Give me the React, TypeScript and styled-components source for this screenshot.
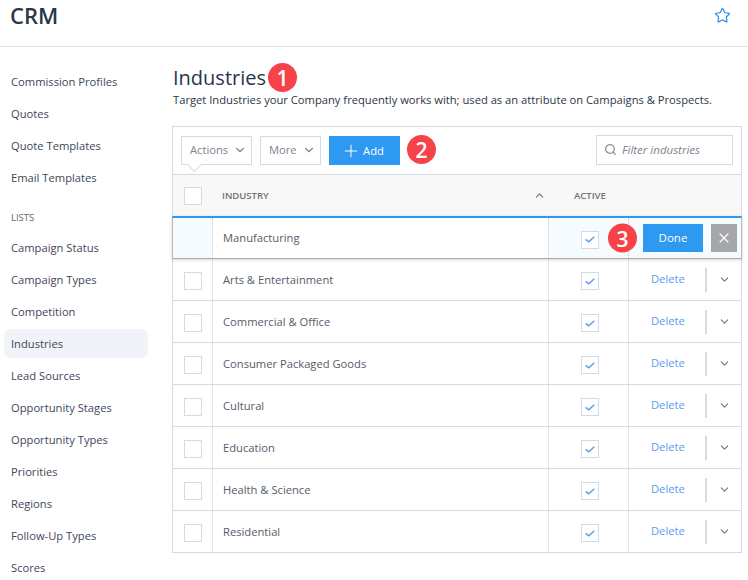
import { createGlobalStyle, styled } from "styled-components";
import { ChevronDown, ChevronUp, Plus, Search, Star, X } from "lucide-react";

const GlobalStyle = createGlobalStyle`
  html, body {
    margin: 0;
    height: 580px;
    overflow: hidden;
    background: #fff;
    font-family: "Open Sans", "Liberation Sans", sans-serif;
    color: #3c4a5c;
  }
  * { box-sizing: border-box; }
`;

const Header = styled.header`
  height: 47px;
  border-bottom: 1px solid #e1e6ee;
  display: flex;
  align-items: flex-start;
  justify-content: space-between;
  padding: 0 17px 0 10px;
`;

const Brand = styled.h1`
  margin: 0;
  font-size: 22px;
  line-height: 31px;
  font-weight: 600;
  color: #2b3648;
`;

const StarButton = styled.span`
  color: #2f8fe8;
  margin-top: 7px;
  display: flex;
`;

const Body = styled.div`
  display: flex;
  align-items: flex-start;
`;

const Sidebar = styled.nav`
  width: 172px;
  flex: none;
  padding: 20px 24px 0 4px;
  display: flex;
  flex-direction: column;
`;

const NavItem = styled.a<{ $active?: boolean }>`
  height: 29px;
  margin-bottom: 3px;
  padding-left: 7px;
  display: flex;
  align-items: center;
  border-radius: 7px;
  font-size: 11.2px;
  color: #3d4759;
  font-weight: ${(p) => (p.$active ? 500 : 400)};
  background: ${(p) => (p.$active ? "#f0f3f8" : "transparent")};
`;

const NavHeading = styled.div`
  height: 29px;
  margin: 8px 0 1px;
  padding-left: 7px;
  display: flex;
  align-items: center;
  font-size: 9.5px;
  color: #5c6675;
`;

const Main = styled.main`
  flex: 1;
  padding: 16px 6px 0 0;
`;

const TitleRow = styled.div`
  display: flex;
  align-items: center;
  gap: 2px;
  height: 29px;
  padding-left: 1px;
`;

const Title = styled.h2`
  margin: 0;
  font-size: 20px;
  font-weight: 500;
  color: #2b3648;
`;

const Badge = styled.span`
  width: 29px;
  height: 29px;
  flex: none;
  border-radius: 50%;
  background: #f7424a;
  color: #fff;
  font-size: 21px;
  font-weight: 600;
  display: flex;
  align-items: center;
  justify-content: center;
`;

const FloatingBadge = styled(Badge)`
  position: absolute;
  right: -9px;
  top: 50%;
  transform: translateY(-50%);
  z-index: 1;
`;

const Description = styled.p`
  margin: 0 0 18px;
  padding-left: 1px;
  height: 16px;
  font-size: 11.2px;
  line-height: 16px;
  color: #2b3648;
  white-space: nowrap;
`;

const Panel = styled.section`
  border: 1px solid #d5dbe5;
  border-bottom: 0;
`;

const Toolbar = styled.div`
  height: 48px;
  padding: 8px 8px 0 8px;
  display: flex;
  align-items: flex-start;
  border-bottom: 1px solid #d5dbe5;
`;

const MenuButton = styled.button<{ $tail?: boolean; $width: number }>`
  position: relative;
  width: ${(p) => p.$width}px;
  height: 29px;
  margin-top: 1px;
  margin-right: 8px;
  padding: 0 0 2px 8px;
  display: flex;
  align-items: center;
  gap: 5px;
  border: 1px solid #d5dbe5;
  background: #fff;
  font: inherit;
  font-size: 11.2px;
  color: #7d8490;

  ${(p) =>
    p.$tail &&
    `&::after {
      content: "";
      position: absolute;
      left: 7px;
      bottom: -6px;
      width: 10px;
      height: 10px;
      background: #fff;
      border-right: 1px solid #d5dbe5;
      border-bottom: 1px solid #d5dbe5;
      transform: rotate(45deg);
    }`}
`;

const AddButton = styled.button`
  width: 71px;
  height: 29px;
  margin-top: 1px;
  margin-right: 7px;
  border: 0;
  padding: 0 4px 0 0;
  background: #2d99f0;
  color: #fff;
  font: inherit;
  font-size: 11.2px;
  font-weight: 500;
  display: flex;
  align-items: center;
  justify-content: center;
  gap: 2px;
`;

const Filter = styled.div`
  width: 137px;
  height: 30px;
  margin-left: auto;
  padding: 0 0 1px 7px;
  display: flex;
  align-items: center;
  gap: 5px;
  border: 1px solid #d5dbe5;
  font-size: 11.5px;
  font-style: italic;
  color: #7d8490;
`;

const columns = "39px 336px 80px 1fr";

const HeadRow = styled.div`
  height: 41px;
  display: grid;
  grid-template-columns: ${columns};
  align-items: center;
  background: #f8f8f8;
  font-size: 9.5px;
  font-weight: 600;
  color: #6f7378;
`;

const HeadIndustry = styled.div`
  display: flex;
  align-items: center;
  justify-content: space-between;
  padding: 0 2px 0 10px;
`;

const HeadActive = styled.div`
  padding-left: 26px;
`;

const Row = styled.div`
  height: 42px;
  display: grid;
  grid-template-columns: ${columns};
  border-bottom: 1px solid #d5dbe5;
`;

const EditRow = styled(Row)`
  position: relative;
  height: 43px;
  margin: 0 -1px;
  border-top: 2px solid #2d99f0;
  border-left: 1px solid #b5b8bc;
  border-right: 1px solid #b5b8bc;
  border-bottom: 1px solid #a9acb0;
  box-shadow: 0 1px 3px rgba(0, 0, 0, 0.18);
`;

const Cell = styled.div<{ $tint?: boolean; $divided?: boolean }>`
  position: relative;
  display: flex;
  align-items: center;
  justify-content: center;
  background: ${(p) => (p.$tint ? "#f6fbff" : "transparent")};
  border-left: ${(p) => (p.$divided ? "1px dotted #c5ccd8" : "0")};
`;

const NameCell = styled(Cell)`
  justify-content: flex-start;
  padding-left: 10px;
  font-size: 11.2px;
  color: #555d68;
`;

const EditNameCell = styled(NameCell)`
  padding-bottom: 2px;
`;

const ActionCell = styled(Cell)`
  justify-content: flex-start;
  padding-left: 22px;
`;

const EditActions = styled(Cell)`
  justify-content: flex-start;
  gap: 8px;
  padding-left: 14px;
`;

const CheckBox = styled.span<{ $shift?: boolean; $inset?: boolean }>`
  width: 18px;
  height: 18px;
  flex: none;
  margin-top: ${(p) => (p.$shift ? "3px" : "0")};
  margin-left: ${(p) => (p.$inset ? "2px" : "0")};
  border: 1px solid #d5dbe5;
  background: #fff;
  display: flex;
  align-items: center;
  justify-content: center;
`;

const DeleteLink = styled.a`
  width: 54px;
  margin-bottom: 2px;
  font-size: 11.2px;
  color: #5a9cec;
`;

const Divider = styled.span`
  width: 2px;
  height: 24px;
  background: #d5dbe5;
  margin-right: 11px;
`;

const RowMenu = styled.span`
  display: flex;
  color: #7b736e;
`;

const DoneButton = styled.button`
  width: 60px;
  height: 28px;
  border: 0;
  padding: 0 0 2px;
  background: #2d99f0;
  color: #fff;
  font: inherit;
  font-size: 11.5px;
`;

const CloseButton = styled.button`
  width: 26px;
  height: 28px;
  border: 0;
  padding: 0;
  background: #a5a7aa;
  color: #fff;
  display: flex;
  align-items: center;
  justify-content: center;
`;

const topNav = ["Commission Profiles", "Quotes", "Quote Templates", "Email Templates"];
const listNav = [
  "Campaign Status",
  "Campaign Types",
  "Competition",
  "Industries",
  "Lead Sources",
  "Opportunity Stages",
  "Opportunity Types",
  "Priorities",
  "Regions",
  "Follow-Up Types",
  "Scores",
];
const industries = [
  "Arts & Entertainment",
  "Commercial & Office",
  "Consumer Packaged Goods",
  "Cultural",
  "Education",
  "Health & Science",
  "Residential",
];

function Checked() {
  return (
    <CheckBox $shift $inset>
      <svg width="10" height="7" viewBox="0 0 10 7" fill="none">
        <polyline points="0.7,3.4 3.8,5.8 9.3,0.8" stroke="#5a9cec" strokeWidth="1.4" />
      </svg>
    </CheckBox>
  );
}

export default function App() {
  return (
    <>
      <GlobalStyle />
      <Header>
        <Brand>CRM</Brand>
        <StarButton>
          <Star size={17} strokeWidth={1.7} />
        </StarButton>
      </Header>
      <Body>
        <Sidebar>
          {topNav.map((item) => (
            <NavItem key={item}>{item}</NavItem>
          ))}
          <NavHeading>LISTS</NavHeading>
          {listNav.map((item) => (
            <NavItem key={item} $active={item === "Industries"}>
              {item}
            </NavItem>
          ))}
        </Sidebar>
        <Main>
          <TitleRow>
            <Title>Industries</Title>
            <Badge>1</Badge>
          </TitleRow>
          <Description>
            Target Industries your Company frequently works with; used as an attribute on Campaigns &amp; Prospects.
          </Description>
          <Panel>
            <Toolbar>
              <MenuButton $tail $width={71}>
                Actions <ChevronDown size={14} />
              </MenuButton>
              <MenuButton $width={61}>
                More <ChevronDown size={14} />
              </MenuButton>
              <AddButton>
                <Plus size={20} strokeWidth={1.2} /> Add
              </AddButton>
              <Badge>2</Badge>
              <Filter>
                <Search size={13} color="#8a8f96" strokeWidth={2.4} />
                Filter industries
              </Filter>
            </Toolbar>
            <HeadRow>
              <Cell>
                <CheckBox />
              </Cell>
              <HeadIndustry>
                INDUSTRY
                <ChevronUp size={13} />
              </HeadIndustry>
              <HeadActive>ACTIVE</HeadActive>
            </HeadRow>
            <EditRow>
              <Cell $tint />
              <EditNameCell $divided>Manufacturing</EditNameCell>
              <Cell $divided $tint>
                <Checked />
                <FloatingBadge>3</FloatingBadge>
              </Cell>
              <EditActions $divided $tint>
                <DoneButton>Done</DoneButton>
                <CloseButton>
                  <X size={16} strokeWidth={1.6} />
                </CloseButton>
              </EditActions>
            </EditRow>
            {industries.map((name) => (
              <Row key={name}>
                <Cell>
                  <CheckBox $shift />
                </Cell>
                <NameCell $divided>{name}</NameCell>
                <Cell $divided>
                  <Checked />
                </Cell>
                <ActionCell $divided>
                  <DeleteLink>Delete</DeleteLink>
                  <Divider />
                  <RowMenu>
                    <ChevronDown size={13} />
                  </RowMenu>
                </ActionCell>
              </Row>
            ))}
          </Panel>
        </Main>
      </Body>
    </>
  );
}
